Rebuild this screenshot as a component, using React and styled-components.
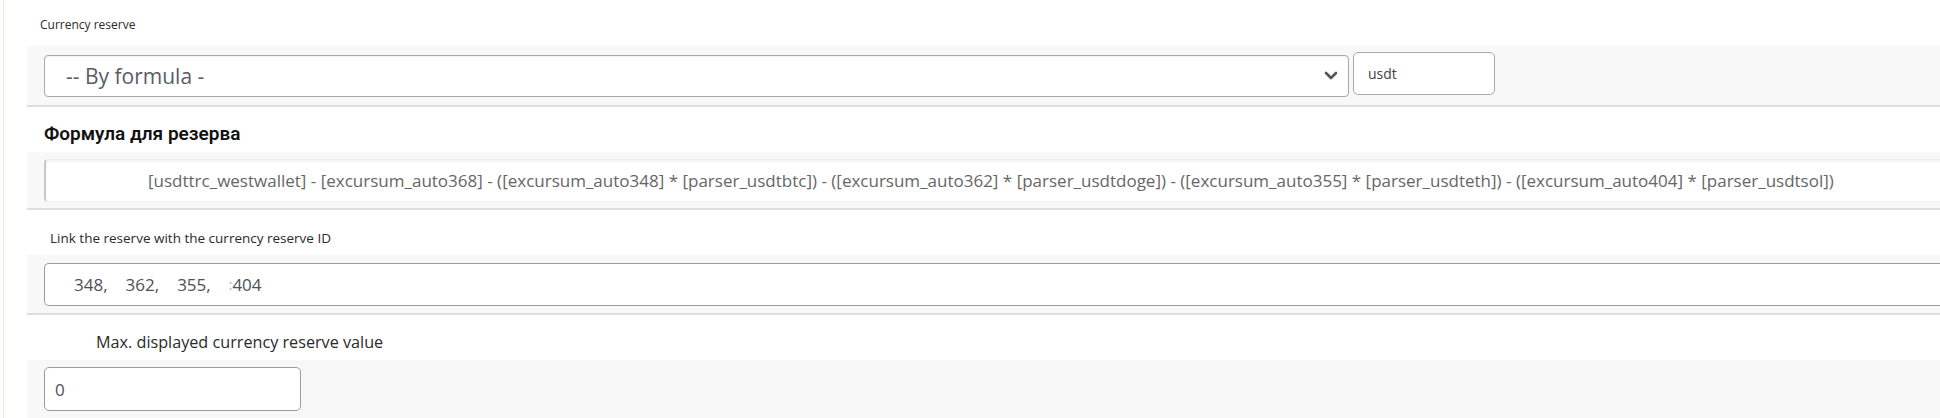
import React from "react";
import styled, { createGlobalStyle } from "styled-components";

const GlobalStyle = createGlobalStyle`
  html, body {
    margin: 0;
    padding: 0;
    background: #ffffff;
    overflow: hidden;
  }
  body {
    font-family: "Open Sans", "Liberation Sans", sans-serif;
    color: #222;
  }
`;

const Page = styled.div`
  width: 1940px;
  height: 418px;
  margin-left: 3px;
  border-left: 1px solid #f1e8df;
  padding-left: 23px;
  box-sizing: border-box;
`;

const Label = styled.div`
  height: ${(p) => p.h}px;
  padding-left: ${(p) => p.indent}px;
  padding-top: ${(p) => p.top}px;
  box-sizing: border-box;
  font-size: ${(p) => p.size}px;
  color: #2a2a2a;
  line-height: 1.2;
  white-space: nowrap;
`;

const Heading = styled.div`
  height: 45px;
  padding-left: 17px;
  padding-top: 15px;
  box-sizing: border-box;
  font-family: Roboto, "Liberation Sans", sans-serif;
  font-weight: 600;
  font-size: 19px;
  color: #111;
`;

const Band = styled.div`
  display: flex;
  align-items: flex-start;
  gap: 4px;
  background: #f8f8f8;
  padding: ${(p) => p.pad};
  padding-left: 17px;
  border-bottom: ${(p) => (p.last ? "none" : "2px solid #dedede")};
  box-sizing: border-box;
  height: ${(p) => p.h}px;
`;

const Select = styled.div`
  width: 1305px;
  height: 42px;
  margin-top: 3px;
  box-sizing: border-box;
  border: 1px solid #a9a9a9;
  border-radius: 4px;
  background: #fff;
  box-shadow: inset 0 1px 2px rgba(0, 0, 0, 0.06);
  display: flex;
  align-items: center;
  justify-content: space-between;
  padding: 0 10px 0 21px;
  font-size: 21px;
  color: #5a5d66;
`;

const Chevron = styled.svg`
  width: 14px;
  height: 10px;
  flex: none;
`;

const CodeInput = styled.div`
  width: 142px;
  height: 43px;
  box-sizing: border-box;
  border: 1px solid #a9a9a9;
  border-radius: 5px;
  background: #fff;
  display: flex;
  align-items: center;
  padding-left: 14px;
  font-size: 14px;
  color: #444;
`;

const FormulaBox = styled.div`
  flex: none;
  width: 1900px;
  height: 43px;
  box-sizing: border-box;
  background: #fff;
  border: 1px solid #ececec;
  border-left: 2px solid #c8c8c8;
  border-radius: 4px 0 0 4px;
  box-shadow: inset 0 2px 3px rgba(0, 0, 0, 0.05);
  display: flex;
  align-items: center;
  padding-left: 102px;
  font-size: 17px;
  color: #666;
  white-space: nowrap;
  overflow: hidden;
`;

const TextField = styled.div`
  flex: none;
  width: ${(p) => p.w}px;
  height: ${(p) => p.h}px;
  box-sizing: border-box;
  border: 1px solid #9c9c9c;
  border-right: ${(p) => (p.open ? "none" : "1px solid #9c9c9c")};
  border-radius: ${(p) => (p.open ? "5px 0 0 5px" : "5px")};
  background: #fff;
  display: flex;
  align-items: center;
  padding-left: ${(p) => p.pl}px;
  font-size: 17px;
  color: #4f5157;
  white-space: pre;
`;

const Id = styled.span`
  margin-right: ${(p) => p.gap}px;
`;

const Caret = styled.span`
  color: #b5b5b5;
  font-size: 14px;
`;

const ids = ["348,", "362,", "355,"];

const formula =
  "[usdttrc_westwallet] - [excursum_auto368] - ([excursum_auto348] * [parser_usdtbtc]) - ([excursum_auto362] * [parser_usdtdoge]) - ([excursum_auto355] * [parser_usdteth]) - ([excursum_auto404] * [parser_usdtsol])";

const App = () => {
  return (
    <>
      <GlobalStyle />
      <Page>
        {/* Currency reserve */}
        <Label h={46} indent={13} top={18} size={12}>
          Currency reserve
        </Label>
        <Band pad="6px 0 0 0" h={61}>
          <Select>
            <span>-- By formula -</span>
            <Chevron viewBox="0 0 14 10">
              <polyline
                points="2,2 7,7 12,2"
                fill="none"
                stroke="#555"
                strokeWidth="2.6"
                strokeLinecap="round"
                strokeLinejoin="round"
              />
            </Chevron>
          </Select>
          <CodeInput>usdt</CodeInput>
        </Band>

        {/* Formula */}
        <Heading>Формула для резерва</Heading>
        <Band pad="7px 0 0 0" h={58}>
          <FormulaBox>{formula}</FormulaBox>
        </Band>

        {/* Linked ids */}
        <Label h={45} indent={23} top={20} size={13.5}>
          Link the reserve with the currency reserve ID
        </Label>
        <Band pad="8px 0 0 0" h={60}>
          <TextField w={1900} h={43} pl={29} open>
            {ids.map((id) => (
              <Id key={id} gap={18}>
                {id}
              </Id>
            ))}
            <Caret>:</Caret>
            404
          </TextField>
        </Band>

        {/* Max value */}
        <Label h={45} indent={69} top={18} size={16.2}>
          Max. displayed currency reserve value
        </Label>
        <Band pad="7px 0 0 0" h={58} last>
          <TextField w={257} h={44} pl={10}>
            0
          </TextField>
        </Band>
      </Page>
    </>
  );
};

export default App;
